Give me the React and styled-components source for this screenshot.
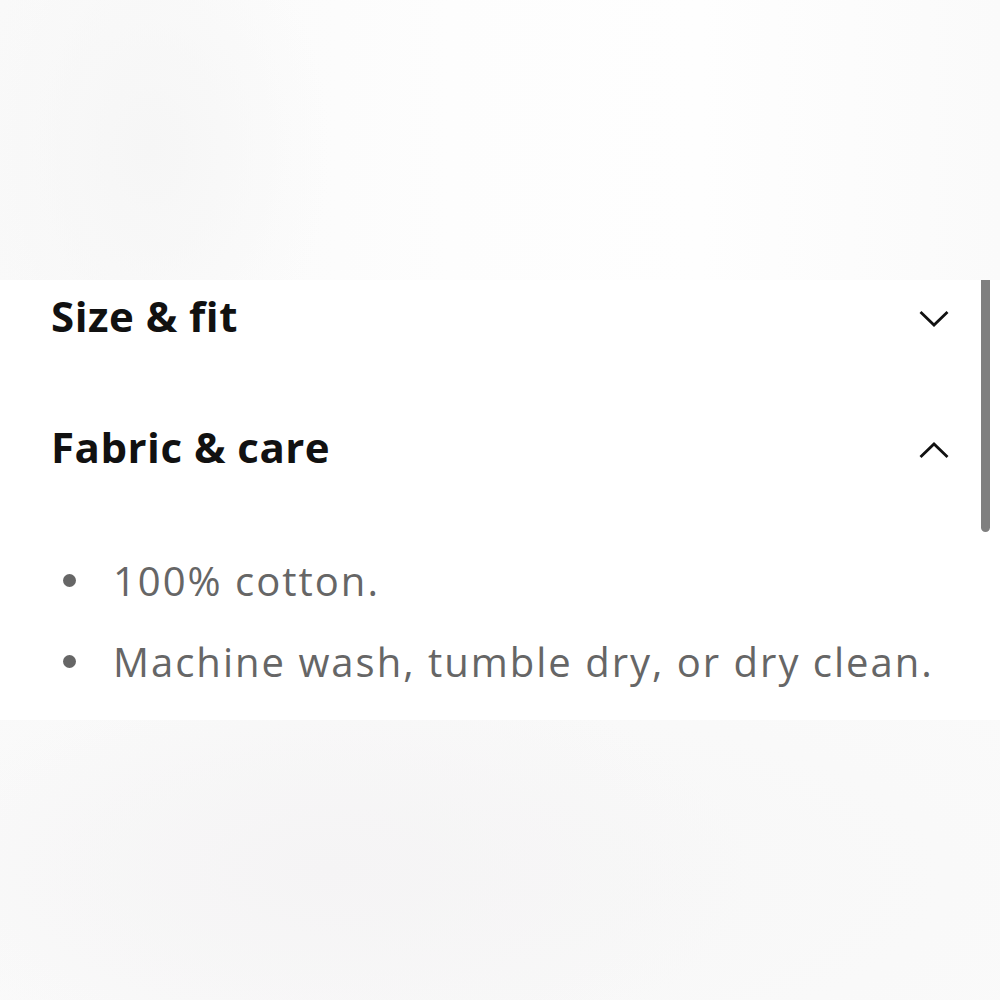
import React from 'react';
import styled, { createGlobalStyle } from 'styled-components';

const Global = createGlobalStyle`
  html, body { margin: 0; padding: 0; }
  body { background: #fafafa; font-family: "Open Sans", "Noto Sans", sans-serif; }
`;

const Page = styled.div`
  display: flex;
  flex-direction: column;
  width: 1000px;
  height: 1000px;
  overflow: hidden;
`;

const Backdrop = styled.div`
  height: ${p => p.h}px;
  flex: ${p => (p.fill ? 1 : 'none')};
  background: ${p => p.bg};
`;

const Sheet = styled.div`
  position: relative;
  background: #fff;
  height: 440px;
  box-sizing: border-box;
  padding: 0 51px 17px;
`;

const Scrollbar = styled.div`
  position: absolute;
  top: 0;
  right: 10px;
  width: 9px;
  height: 252px;
  background: #7f7f7f;
  border-radius: 0 0 5px 5px;
`;

const Section = styled.section`
  & + & { margin-top: 55px; }
`;

const Header = styled.div`
  height: 76px;
  display: flex;
  align-items: center;
  justify-content: space-between;
`;

const Title = styled.h2`
  margin: 0 0 6px;
  font-size: 42px;
  font-weight: 700;
  color: #111;
  letter-spacing: 0.5px;
`;

const Chevron = styled.svg`
  width: 30px;
  height: 18px;
  display: block;
  margin-top: 2px;
`;

const List = styled.ul`
  list-style: none;
  margin: 53px 0 0;
  padding: 0;
`;

const Item = styled.li`
  position: relative;
  height: 81px;
  display: flex;
  align-items: center;
  padding-left: 62px;
  font-size: 40px;
  color: #666;
  letter-spacing: 2px;
  &::before {
    content: '';
    position: absolute;
    left: 12px;
    top: 34px;
    width: 13px;
    height: 13px;
    border-radius: 50%;
    background: #666;
  }
`;

function ChevronIcon({ up }) {
  return (
    <Chevron viewBox="0 0 30 18">
      <path
        d={up ? 'M1.5 16 L15 3 L28.5 16' : 'M1.5 2 L15 15 L28.5 2'}
        fill="none"
        stroke="#111"
        strokeWidth="2.8"
      />
    </Chevron>
  );
}

export default function App() {
  return (
    <Page>
      <Global />
      <Backdrop
        h={280}
        bg="radial-gradient(ellipse 180px 260px at 150px 150px, #f6f6f6, rgba(250,250,250,0) 100%), linear-gradient(90deg, #f9f9f9 0%, #fdfdfd 45%, #fefefe 70%, #fafafa 100%)"
      />
      <Sheet>
        <Scrollbar />
        <Section>
          <Header>
            <Title>Size &amp; fit</Title>
            <ChevronIcon />
          </Header>
        </Section>
        <Section>
          <Header>
            <Title>Fabric &amp; care</Title>
            <ChevronIcon up />
          </Header>
          <List>
            <Item>100% cotton.</Item>
            <Item>Machine wash, tumble dry, or dry clean.</Item>
          </List>
        </Section>
      </Sheet>
      <Backdrop
        fill
        bg="radial-gradient(ellipse 420px 200px at 330px 150px, #f5f4f5, rgba(249,249,249,0) 100%), radial-gradient(ellipse 700px 260px at 480px 160px, #f7f7f7, #fafafa 100%)"
      />
    </Page>
  );
}
